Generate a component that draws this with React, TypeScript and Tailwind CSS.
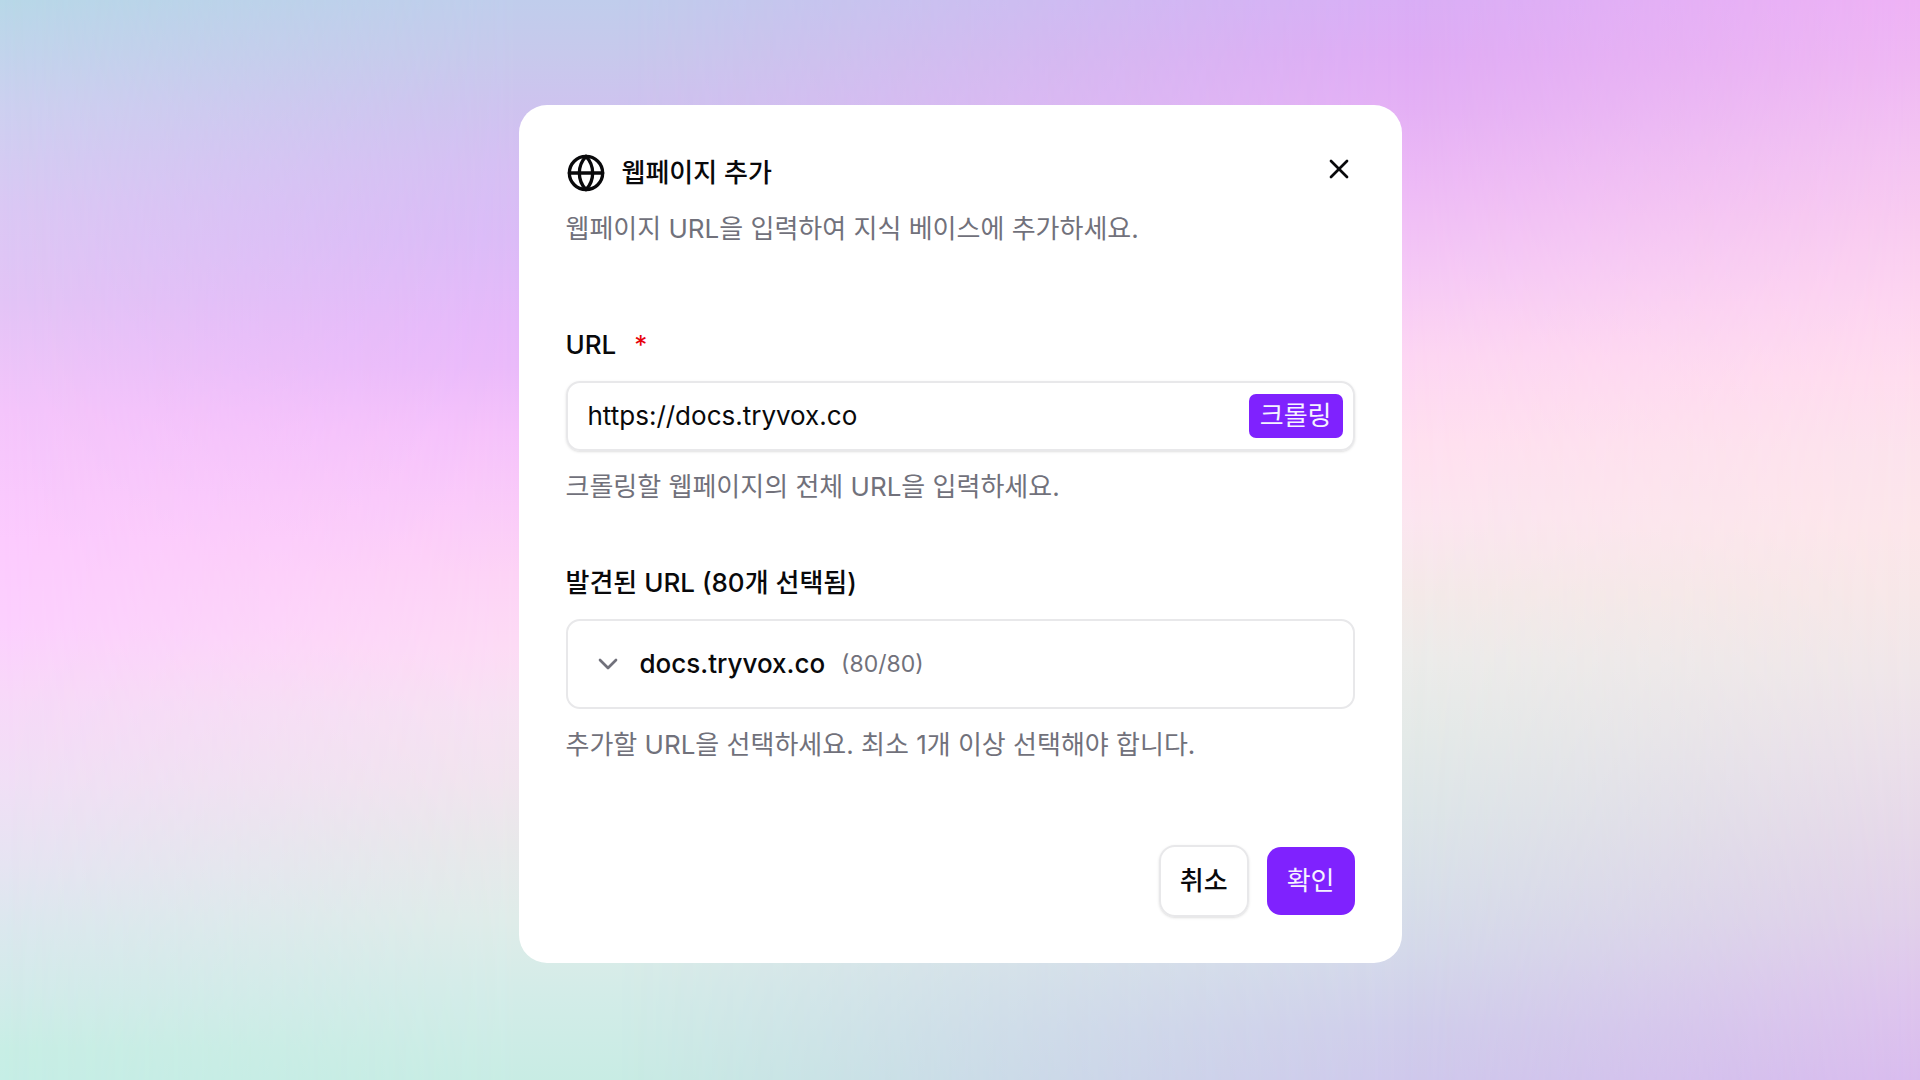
import React, { useState } from 'react';
import { ChevronDown, Globe, X } from 'lucide-react';

// Vertical colour ramps that fade into each other from left to right
const Backdrop: React.FC = () => {
  return (
    <div className="absolute inset-0" aria-hidden="true">
      <div className="absolute inset-0 bg-[linear-gradient(to_bottom,#b8d8e8_0%,#c2d4ec_5%,#cdd0f0_10%,#dac8f4_19%,#e3c4f6_28%,#f4c5fb_38%,#fccbfe_50%,#fcd0fe_58%,#f8d8f9_64%,#f1dff6_72%,#e6e4f2_80%,#dbe8ee_86%,#d2ebea_92%,#c8eee5_97%,#c6eee6_100%)]" />
      <div className="absolute inset-0 bg-[linear-gradient(to_bottom,#c0cdec_0%,#c7c9ec_5%,#cec3ef_10%,#d5bff3_15%,#dbbbf7_22%,#e6b9fa_30%,#eabafa_34%,#f5c2fb_40%,#facbf9_47%,#fdd3f6_53%,#fddbf5_60%,#f6e2f2_66%,#f1e4ee_72%,#e8e8ea_78%,#dfece9_85%,#d3ece8_92%,#c8ece4_100%)] [mask-image:linear-gradient(to_right,transparent,black_27%)]" />
      <div className="absolute inset-0 bg-[linear-gradient(to_bottom,#d9aef6_0%,#dfacf5_5%,#e4b0f5_10%,#edbaf6_17%,#f5c8f6_25%,#fdd6f3_33%,#ffe0f0_41%,#fce6f0_48%,#f4eae9_55%,#ececea_61%,#e4eae8_68%,#dde6e8_75%,#d8e0e9_82%,#d4d9ea_88%,#d0ceeb_95%,#cfc9ec_100%)] [mask-image:linear-gradient(to_right,transparent_32%,black_73%)]" />
      <div className="absolute inset-0 bg-[linear-gradient(to_bottom,#eeb2f5_0%,#efb8f3_6%,#f3c3f2_13%,#f8cbf0_20%,#fdd5f0_28%,#ffddee_35%,#fce3ec_42%,#fce6ea_49%,#f7e7e8_55%,#f0e6e9_62%,#ebdfea_70%,#e6d8e9_77%,#e1d0ea_85%,#dec5ed_92%,#d9bcee_100%)] [mask-image:linear-gradient(to_right,transparent_73%,black)]" />
    </div>
  );
};

export default function App() {
  const [url, setUrl] = useState('https://docs.tryvox.co');

  return (
    <main className="relative flex min-h-screen flex-col items-center justify-center px-6 pt-8 pb-11 font-['Inter','Noto_Sans_CJK_KR',sans-serif] text-[26px] leading-9 text-zinc-950">
      <Backdrop />

      <section
        role="dialog"
        aria-labelledby="dialog-title"
        className="relative w-full max-w-[883px] rounded-[28px] bg-white px-[47px] pt-12 pb-[46px]"
      >
        {/* Header */}
        <header className="mb-20">
          <div className="flex items-center justify-between">
            <div className="flex items-center gap-4">
              <Globe size={40} />
              <h1 id="dialog-title" className="font-medium">웹페이지 추가</h1>
            </div>
            <button type="button" aria-label="닫기" className="-mt-2">
              <X size={32} />
            </button>
          </div>
          <p className="mt-[18px] text-zinc-500">웹페이지 URL을 입력하여 지식 베이스에 추가하세요.</p>
        </header>

        <form onSubmit={(e) => e.preventDefault()}>
          {/* URL field */}
          <div className="mb-[60px] flex flex-col gap-[18px]">
            <label htmlFor="url" className="flex gap-[18px] font-medium">
              URL <span className="font-normal text-red-600">*</span>
            </label>
            <div className="flex items-center rounded-[14px] border-2 border-[#e8e8ea] py-[11px] pr-[10px] pl-5 shadow-sm">
              <input
                id="url"
                type="text"
                value={url}
                onChange={(e) => setUrl(e.target.value)}
                className="min-w-0 flex-1 outline-none"
              />
              <button type="button" className="rounded-[7px] bg-[#7f22fe] px-[11px] py-1 text-violet-50">
                크롤링
              </button>
            </div>
            <p className="text-zinc-500">크롤링할 웹페이지의 전체 URL을 입력하세요.</p>
          </div>

          {/* Found URLs */}
          <div className="mb-[82px] flex flex-col gap-[18px]">
            <h2 className="font-medium">발견된 URL (80개 선택됨)</h2>
            <div className="rounded-[14px] border-2 border-[#e8e8ea] px-6 py-[25px]">
              <button type="button" className="flex items-center gap-4">
                <ChevronDown size={32} className="text-zinc-500" />
                <span className="font-medium">docs.tryvox.co</span>
                <span className="text-[23px] leading-9 text-zinc-500">(80/80)</span>
              </button>
            </div>
            <p className="text-zinc-500">추가할 URL을 선택하세요. 최소 1개 이상 선택해야 합니다.</p>
          </div>

          {/* Actions */}
          <div className="flex items-center justify-end gap-[18px]">
            <button type="button" className="rounded-[16px] border-2 border-[#e8e8ea] px-[19px] py-4 font-medium shadow-sm">
              취소
            </button>
            <button type="submit" className="rounded-[14px] bg-[#7f22fe] px-5 py-4 text-violet-50">
              확인
            </button>
          </div>
        </form>
      </section>
    </main>
  );
}
